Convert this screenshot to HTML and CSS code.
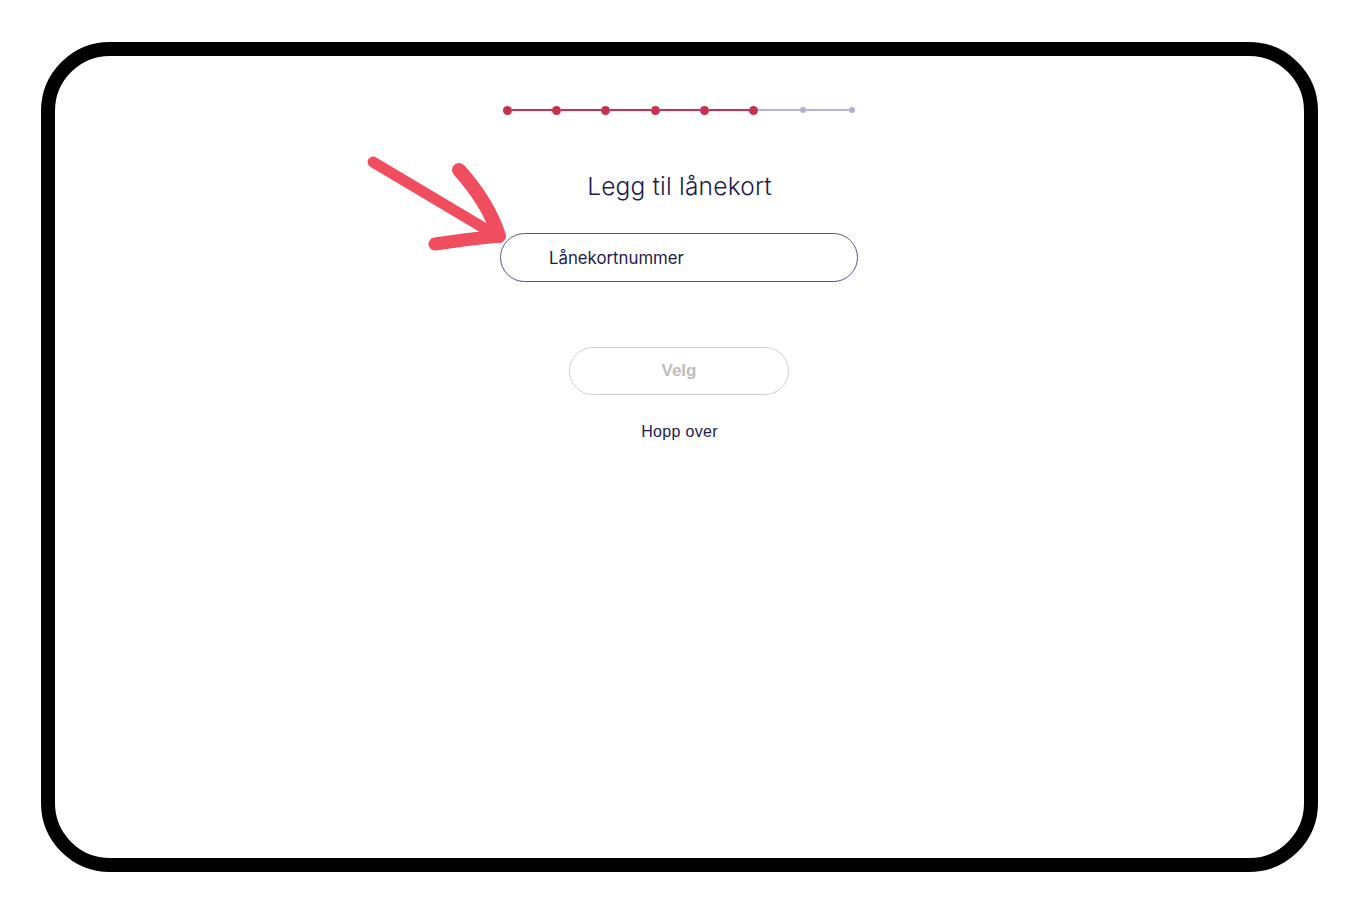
FILE: index.html
```html
<!DOCTYPE html>
<html lang="no">
<head>
<meta charset="utf-8">
<title>Legg til lånekort</title>
<link rel="stylesheet" href="styles.css">
</head>
<body>
<div class="frame">
  <div class="progress">
    <span class="dot on"></span><span class="seg on s1"></span>
    <span class="dot on"></span><span class="seg on s1"></span>
    <span class="dot on"></span><span class="seg on s1"></span>
    <span class="dot on"></span><span class="seg on s1"></span>
    <span class="dot on"></span><span class="seg on s1"></span>
    <span class="dot on"></span><span class="seg s2"></span>
    <span class="dot"></span><span class="seg s3"></span>
    <span class="dot"></span>
  </div>
  <h1 class="title">Legg til lånekort</h1>
  <div class="field">Lånekortnummer</div>
  <button class="btn" type="button">Velg</button>
  <a class="skip" href="#">Hopp over</a>
</div>
<svg class="arrow" width="160" height="110" viewBox="0 0 160 110">
  <path d="M13 12 L134 84" fill="none" stroke="#f04e5f" stroke-width="11" stroke-linecap="round"/>
  <path d="M99 20 Q128 52 139 86" fill="none" stroke="#f04e5f" stroke-width="14" stroke-linecap="round"/>
  <path d="M75 94 Q108 89 139 86" fill="none" stroke="#f04e5f" stroke-width="13" stroke-linecap="round"/>
</svg>
</body>
</html>
```
FILE: styles.css
```css
html, body {
  margin: 0;
  padding: 0;
  background: #ffffff;
}
body {
  position: relative;
  width: 1358px;
  height: 916px;
  overflow: hidden;
  font-family: "Liberation Sans", Arial, sans-serif;
}
.frame {
  box-sizing: border-box;
  margin: 42px 0 0 41px;
  width: 1277px;
  height: 830px;
  border: 14px solid #000;
  border-radius: 69px;
  display: flex;
  flex-direction: column;
  align-items: center;
  padding-top: 49px;
}
.progress {
  display: flex;
  align-items: center;
  height: 10px;
  margin-left: -1px;
}
.dot {
  width: 6px;
  height: 6px;
  border-radius: 50%;
  background: #aeb0cc;
  flex: none;
}
.dot.on {
  width: 9px;
  height: 9px;
  background: #c9304f;
}
.seg {
  height: 2px;
  background: #b3b5d0;
  flex: none;
}
.seg.on { background: #c9304f; }
.s1 { width: 40.2px; }
.s2 { width: 41.7px; }
.s3 { width: 43.2px; }
.title {
  margin: 56px 0 0 0;
  font-family: "Inter", "Noto Sans", sans-serif;
  font-weight: 300;
  font-size: 24.5px;
  line-height: 30px;
  color: #1c1b4c;
  letter-spacing: 0.2px;
}
.field {
  box-sizing: border-box;
  margin-top: 32px;
  margin-left: -1px;
  width: 358px;
  height: 49px;
  border: 1.3px solid #55557c;
  border-radius: 25px;
  padding-left: 48px;
  display: flex;
  align-items: center;
  font-family: "Inter", "Noto Sans", sans-serif;
  font-weight: 400;
  font-size: 16.8px;
  color: #1c1b4c;
}
.btn {
  box-sizing: border-box;
  margin-top: 65px;
  margin-left: -1px;
  width: 220px;
  height: 48px;
  border: 1.3px solid #cfcfcf;
  border-radius: 24px;
  background: #fff;
  font-family: "Liberation Sans", Arial, sans-serif;
  font-weight: 700;
  font-size: 17px;
  color: #bdbdbd;
  padding: 0;
}
.skip {
  margin-top: 28px;
  font-family: "Liberation Sans", Arial, sans-serif;
  font-size: 16px;
  letter-spacing: 0.3px;
  color: #1c1b4c;
  text-decoration: none;
}
.arrow {
  position: absolute;
  left: 360px;
  top: 150px;
}
```
